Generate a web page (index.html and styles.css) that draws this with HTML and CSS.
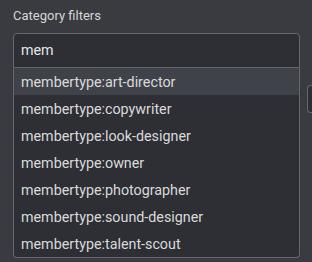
FILE: index.html
```html
<!DOCTYPE html>
<html lang="en">
<head>
  <meta charset="UTF-8">
  <meta name="viewport" content="width=device-width, initial-scale=1.0">
  <title>Category filters</title>
  <link rel="stylesheet" href="styles.css">
</head>
<body>
  <div class="panel">
    <label class="field-label" for="category">Category filters</label>

    <div class="field">
      <input type="text" id="category" class="field-input" value="mem">
      <ul class="suggestions">
        <li class="suggestion active">membertype:art-director</li>
        <li class="suggestion">membertype:copywriter</li>
        <li class="suggestion">membertype:look-designer</li>
        <li class="suggestion">membertype:owner</li>
        <li class="suggestion">membertype:photographer</li>
        <li class="suggestion">membertype:sound-designer</li>
        <li class="suggestion">membertype:talent-scout</li>
      </ul>
    </div>

    <div class="row">
      <div class="row-main"></div>
      <button class="row-btn" type="button"></button>
    </div>
  </div>
</body>
</html>
```

FILE: styles.css
```css
html, body {
  margin: 0;
  height: 100%;
}
body {
  background-color: #393b40;
  color: #dcdcdc;
  font-family: Roboto, "Noto Sans", sans-serif;
  overflow: hidden;
}
.panel {
  padding: 7px 0 0 13px;
  display: flex;
  flex-direction: column;
}
.field-label {
  font-size: 13px;
  line-height: 18px;
  color: #d6d6d6;
  margin-bottom: 8px;
}
.field {
  position: relative;
  width: 287px;
}
.field-input {
  box-sizing: border-box;
  width: 100%;
  height: 35px;
  margin: 0;
  padding: 0 7px 1px;
  background-color: #2d2f34;
  color: #e6e6e6;
  border: 1px solid #64676c;
  border-radius: 4px 4px 0 0;
  font-family: Roboto, "Noto Sans", sans-serif;
  font-size: 14.3px;
  outline: none;
  display: block;
}
.suggestions {
  position: absolute;
  top: 100%;
  left: 0;
  right: 0;
  margin: 0;
  padding: 0;
  list-style: none;
  background-color: #2d2f34;
  border: 1px solid #64676c;
  border-top: none;
  border-radius: 0 0 4px 4px;
  z-index: 2;
}
.suggestion {
  height: 27px;
  line-height: 29px;
  padding-left: 7px;
  font-size: 14.3px;
  color: #dadada;
  white-space: nowrap;
  overflow: hidden;
}
.suggestion.active {
  background-color: #40424a;
}
.row {
  display: flex;
  gap: 8px;
  margin-top: 17px;
}
.row-main {
  width: 286px;
}
.row-btn {
  width: 5px;
  height: 28px;
  background-color: #2d2f34;
  border: 1px solid #64676c;
  border-right: none;
  border-radius: 4px 0 0 4px;
  padding: 0;
}
```
